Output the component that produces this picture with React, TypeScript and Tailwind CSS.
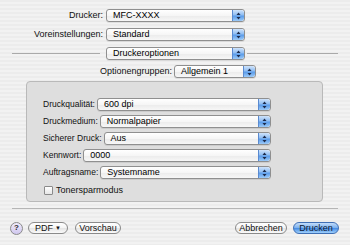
import React from "react";

const Stepper = () => (
  <div className="h-full w-[12px] rounded-r-[3px] border-l border-[#5a8ad0] bg-[linear-gradient(180deg,#cfe3fb_0%,#8fbdf2_45%,#5a9be9_55%,#9ccaf8_100%)] flex items-center justify-center">
    <svg width="5" height="8" viewBox="0 0 5 8">
      <path d="M2.5 0.5 L4.5 3 L0.5 3 Z" fill="#1c2a4a" />
      <path d="M2.5 7.5 L4.5 5 L0.5 5 Z" fill="#1c2a4a" />
    </svg>
  </div>
);

const Popup = ({ text, className = "" }: { text: string; className?: string }) => (
  <div
    className={
      "h-[13px] flex items-stretch rounded-[3px] border border-[#8f8f8f] bg-[linear-gradient(180deg,#ffffff_0%,#f6f6f6_50%,#ebebeb_51%,#f7f7f7_100%)] shadow-[0_1px_0_rgba(0,0,0,0.08)] " +
      className
    }
  >
    <div className="flex-1 pl-[6px] flex items-center text-[9px] leading-none text-black overflow-hidden whitespace-nowrap">
      {text}
    </div>
    <Stepper />
  </div>
);

const Row = ({ label, value }: { label: string; value: string }) => (
  <div className="flex items-center h-[13px]">
    <div className="w-[103px] text-right text-[9px] leading-none text-[#111] whitespace-nowrap">{label}</div>
    <Popup text={value} className="ml-[3px] w-[139px]" />
  </div>
);

const GroupRow = ({ label, value }: { label: string; value: string }) => (
  <div className="flex items-center h-[13px] w-[228px]">
    <div className="text-[8.5px] leading-none text-[#111] whitespace-nowrap pr-[2px]">{label}</div>
    <Popup text={value} className="flex-1" />
  </div>
);

const Pill = ({ children, className = "" }: { children: React.ReactNode; className?: string }) => (
  <div
    className={
      "h-[12px] rounded-full border border-[#8a8a8a] bg-[linear-gradient(180deg,#ffffff_0%,#f4f4f4_50%,#e4e4e4_51%,#fafafa_100%)] flex items-center justify-center text-[9px] leading-none text-[#111] " +
      className
    }
  >
    {children}
  </div>
);

export default function App() {
  return (
    <div
      className="w-[350px] h-[245px] overflow-hidden flex flex-col bg-[repeating-linear-gradient(180deg,#ececec_0px,#ececec_2px,#f2f2f2_2px,#f2f2f2_4px)]"
      style={{ fontFamily: '"Liberation Sans", Arial, sans-serif' }}
    >
      <div className="pt-[9px]">
        <Row label="Drucker:" value="MFC-XXXX" />
      </div>
      <div className="mt-[6px]">
        <Row label="Voreinstellungen:" value="Standard" />
      </div>
      <div className="mt-[6px] flex items-center h-[13px]">
        <div className="ml-[12px] w-[88px] h-px bg-[#a9a9a9]" />
        <Popup text="Druckeroptionen" className="ml-[6px] w-[139px]" />
        <div className="ml-[2px] w-[91px] h-px bg-[#a9a9a9]" />
      </div>
      <div className="mt-[5px] flex items-center h-[13px] pl-[100px]">
        <div className="text-[9px] leading-none text-[#111] whitespace-nowrap pr-[2px]">Optionengruppen:</div>
        <Popup text="Allgemein 1" className="w-[82px]" />
      </div>

      <div className="mt-[3px] ml-[26px] w-[297px] h-[121px] rounded-[4px] border border-[#b9b9b9] bg-[#dedede] pl-[16px] pt-[16px] flex flex-col">
        <GroupRow label="Druckqualität:" value="600 dpi" />
        <div className="mt-[4px]">
          <GroupRow label="Druckmedium:" value="Normalpapier" />
        </div>
        <div className="mt-[4px]">
          <GroupRow label="Sicherer Druck:" value="Aus" />
        </div>
        <div className="mt-[4px]">
          <GroupRow label="Kennwort:" value="0000" />
        </div>
        <div className="mt-[4px]">
          <GroupRow label="Auftragsname:" value="Systemname" />
        </div>
        <div className="mt-[7px] flex items-center h-[9px] pl-[1px]">
          <div className="w-[9px] h-[9px] rounded-[1px] border border-[#8a8a8a] bg-[linear-gradient(180deg,#ffffff,#e6e6e6)]" />
          <div className="ml-[3px] text-[9px] leading-none text-[#111]">Tonersparmodus</div>
        </div>
      </div>

      <div className="mt-[6px] ml-[12px] w-[326px] h-px bg-[#b5b5b5]" />

      <div className="mt-[13px] flex items-center h-[12px]">
        <div className="ml-[10px] w-[13px] h-[13px] rounded-full border border-[#8a8a8a] bg-[linear-gradient(180deg,#f0ecfb,#cfc6ee)] flex items-center justify-center text-[8px] font-bold leading-none text-[#2a2a2a]">
          ?
        </div>
        <Pill className="ml-[5px] w-[40px]">
          PDF <span className="ml-[2px] text-[6px]">▼</span>
        </Pill>
        <Pill className="ml-[7px] w-[46px]">Vorschau</Pill>
        <Pill className="ml-[114px] w-[52px]">Abbrechen</Pill>
        <div className="ml-[6px] w-[46px] h-[12px] rounded-full border border-[#3f6fb5] bg-[linear-gradient(180deg,#c4ddfa_0%,#7fb3ef_45%,#4a8fe6_55%,#9fd0fb_100%)] flex items-center justify-center text-[9px] leading-none text-[#0e1a33]">
          Drucken
        </div>
      </div>
    </div>
  );
}
